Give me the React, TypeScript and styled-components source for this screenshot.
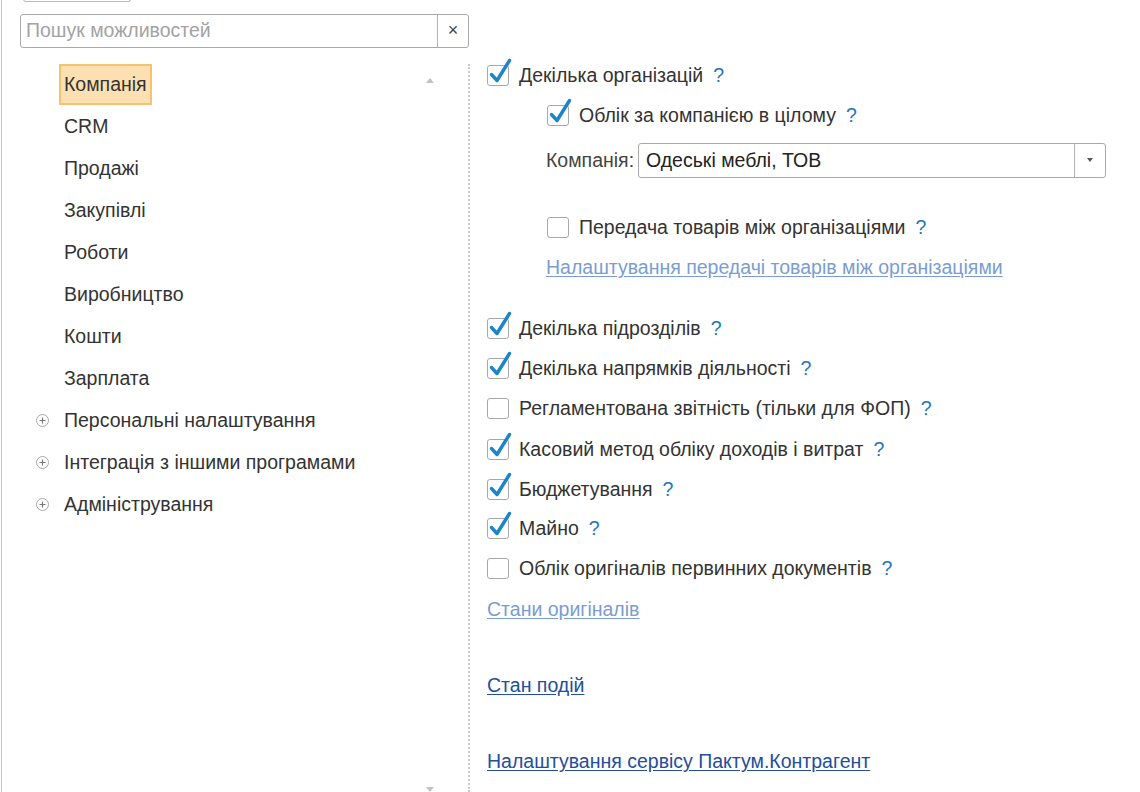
import React from "react";
import styled, { createGlobalStyle } from "styled-components";

const Global = createGlobalStyle`
  html, body { margin: 0; padding: 0; background: #fff; }
  body { font-family: "Liberation Sans", Arial, sans-serif; color: #333; }
`;

const Page = styled.div`
  width: 1139px;
  height: 792px;
  margin-left: 1px;
  border-left: 1px solid #c4c4c4;
  box-sizing: border-box;
  overflow: hidden;
  display: flex;
  flex-direction: column;
  font-size: 19.5px;
`;

const TopTab = styled.div`
  width: 106px;
  height: 2px;
  margin-left: 21px;
  border: 1px solid #b8b8b8;
  border-top: none;
  border-radius: 0 0 3px 3px;
  margin-top: -1px;
`;

const Search = styled.div`
  margin: 12px 0 0 18px;
  width: 449px;
  height: 34px;
  box-sizing: border-box;
  border: 1px solid #a9a9a9;
  border-radius: 3px;
  display: flex;
  align-items: stretch;
`;

const SearchText = styled.div`
  flex: 1;
  display: flex;
  align-items: center;
  padding-left: 5px;
  color: #a3a3a3;
`;

const ClearButton = styled.div`
  width: 30px;
  border-left: 1px solid #b5b5b5;
  display: flex;
  align-items: center;
  justify-content: center;
  color: #444;
  font-size: 18px;
`;

const Main = styled.div`
  margin-top: 16px;
  height: 731px;
  display: flex;
`;

const TreeColumn = styled.div`
  width: 466px;
  flex: none;
  display: flex;
`;

const TreeList = styled.div`
  flex: 1;
  display: flex;
  flex-direction: column;
`;

const TreeRow = styled.div`
  height: 42px;
  display: flex;
  align-items: center;
  padding-left: 34px;
`;

const IconSlot = styled.div`
  width: 13px;
  height: 13px;
  flex: none;
  display: flex;
`;

const TreeLabel = styled.div<{ $active?: boolean }>`
  margin-left: 10px;
  height: 41px;
  box-sizing: border-box;
  display: flex;
  align-items: center;
  padding: 0 3px;
  border: 2px solid ${(p) => (p.$active ? "#f6c270" : "transparent")};
  background: ${(p) => (p.$active ? "#fde0b2" : "transparent")};
  color: #333;
  white-space: nowrap;
`;

const Scroll = styled.div`
  width: 20px;
  margin-right: 28px;
  display: flex;
  flex-direction: column;
  justify-content: space-between;
  align-items: center;
  padding: 14px 0 0;
`;

const ArrowUp = styled.div`
  width: 0;
  height: 0;
  border-left: 4px solid transparent;
  border-right: 4px solid transparent;
  border-bottom: 5px solid #c2c2c2;
`;

const ArrowDown = styled.div`
  width: 0;
  height: 0;
  border-left: 4px solid transparent;
  border-right: 4px solid transparent;
  border-top: 5px solid #c2c2c2;
`;

const Panel = styled.div`
  flex: 1;
  border-left: 2px dotted #c9c9c9;
  padding-left: 17px;
  display: flex;
  flex-direction: column;
`;

const Row = styled.div<{ $mt?: number; $indent?: number; $h?: number }>`
  margin-top: ${(p) => p.$mt ?? 0}px;
  margin-left: ${(p) => p.$indent ?? 0}px;
  height: ${(p) => p.$h ?? 24}px;
  display: flex;
  align-items: center;
  white-space: nowrap;
`;

const Box = styled.div`
  position: relative;
  width: 22px;
  height: 21px;
  box-sizing: border-box;
  border: 1px solid #a8a8a8;
  border-radius: 3px;
  background: #fff;
  flex: none;
`;

const Tick = styled.svg`
  position: absolute;
  left: 0;
  top: -7px;
  overflow: visible;
`;

const Label = styled.span`
  margin-left: 10px;
  color: #333;
`;

const Help = styled.span`
  margin-left: 10px;
  color: #1f77bb;
`;

const FieldLabel = styled.span`
  color: #444;
  width: 92px;
`;

const Combo = styled.div`
  width: 468px;
  height: 35px;
  box-sizing: border-box;
  border: 1px solid #a9a9a9;
  border-radius: 3px;
  display: flex;
  align-items: stretch;
`;

const ComboText = styled.div`
  flex: 1;
  display: flex;
  align-items: center;
  padding-left: 7px;
  color: #222;
`;

const ComboButton = styled.div`
  width: 30px;
  border-left: 1px solid #b5b5b5;
  display: flex;
  align-items: center;
  justify-content: center;
`;

const SmallDown = styled.div`
  width: 0;
  height: 0;
  border-left: 3.5px solid transparent;
  border-right: 3.5px solid transparent;
  border-top: 4px solid #555;
`;

const Link = styled.a<{ $light?: boolean }>`
  color: ${(p) => (p.$light ? "#7a9dd1" : "#234e9b")};
  text-decoration: underline;
  text-underline-offset: 2px;
  cursor: pointer;
`;

const Plus = () => (
  <svg width="13" height="13" viewBox="0 0 13 13">
    <circle cx="6.5" cy="6.5" r="6" fill="#fff" stroke="#a8a8a8" strokeWidth="1" />
    <path d="M3.5 6.5h6M6.5 3.5v6" stroke="#777" strokeWidth="1.2" />
  </svg>
);

const Check = ({ on }: { on?: boolean }) => (
  <Box>
    {on && (
      <Tick width="22" height="28" viewBox="0 0 22 28">
        <path
          d="M3.5 15.5 L9 21.5 L21.5 1.5"
          fill="none"
          stroke="#1b84cb"
          strokeWidth="3.4"
          strokeLinecap="round"
          strokeLinejoin="round"
        />
      </Tick>
    )}
  </Box>
);

const tree: { label: string; plus?: boolean; active?: boolean }[] = [
  { label: "Компанія", active: true },
  { label: "CRM" },
  { label: "Продажі" },
  { label: "Закупівлі" },
  { label: "Роботи" },
  { label: "Виробництво" },
  { label: "Кошти" },
  { label: "Зарплата" },
  { label: "Персональні налаштування", plus: true },
  { label: "Інтеграція з іншими програмами", plus: true },
  { label: "Адміністрування", plus: true },
];

const options: { label: string; on: boolean; mt: number }[] = [
  { label: "Декілька підрозділів", on: true, mt: 37 },
  { label: "Декілька напрямків діяльності", on: true, mt: 16 },
  { label: "Регламентована звітність (тільки для ФОП)", on: false, mt: 16 },
  { label: "Касовий метод обліку доходів і витрат", on: true, mt: 17 },
  { label: "Бюджетування", on: true, mt: 16 },
  { label: "Майно", on: true, mt: 15 },
  { label: "Облік оригіналів первинних документів", on: false, mt: 16 },
];

export default function App() {
  return (
    <>
      <Global />
      <Page>
        <TopTab />
        <Search>
          <SearchText>Пошук можливостей</SearchText>
          <ClearButton>×</ClearButton>
        </Search>
        <Main>
          <TreeColumn>
            <TreeList>
              {tree.map((t) => (
                <TreeRow key={t.label}>
                  <IconSlot>{t.plus && <Plus />}</IconSlot>
                  <TreeLabel $active={t.active}>{t.label}</TreeLabel>
                </TreeRow>
              ))}
            </TreeList>
            <Scroll>
              <ArrowUp />
              <ArrowDown />
            </Scroll>
          </TreeColumn>
          <Panel>
            <Row>
              <Check on />
              <Label>Декілька організацій</Label>
              <Help>?</Help>
            </Row>
            <Row $mt={16} $indent={60}>
              <Check on />
              <Label>Облік за компанією в цілому</Label>
              <Help>?</Help>
            </Row>
            <Row $mt={15} $indent={59} $h={35}>
              <FieldLabel>Компанія:</FieldLabel>
              <Combo>
                <ComboText>Одеські меблі, ТОВ</ComboText>
                <ComboButton>
                  <SmallDown />
                </ComboButton>
              </Combo>
            </Row>
            <Row $mt={38} $indent={60}>
              <Check />
              <Label>Передача товарів між організаціями</Label>
              <Help>?</Help>
            </Row>
            <Row $mt={16} $indent={59}>
              <Link $light>Налаштування передачі товарів між організаціями</Link>
            </Row>
            {options.map((o) => (
              <Row key={o.label} $mt={o.mt}>
                <Check on={o.on} />
                <Label>{o.label}</Label>
                <Help>?</Help>
              </Row>
            ))}
            <Row $mt={17}>
              <Link $light>Стани оригіналів</Link>
            </Row>
            <Row $mt={52}>
              <Link>Стан подій</Link>
            </Row>
            <Row $mt={52}>
              <Link>Налаштування сервісу Пактум.Контрагент</Link>
            </Row>
          </Panel>
        </Main>
      </Page>
    </>
  );
}
